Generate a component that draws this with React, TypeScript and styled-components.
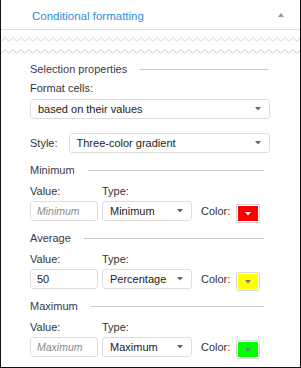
import styled, { createGlobalStyle } from "styled-components";

const GlobalStyle = createGlobalStyle`
  html, body {
    margin: 0;
    padding: 0;
    background: #ffffff;
  }
  body {
    font-family: "Liberation Sans", Arial, sans-serif;
    font-size: 11px;
    color: #333333;
  }
`;

const Panel = styled.div`
  width: 301px;
  height: 368px;
  box-sizing: border-box;
  border-left: 1px solid #111;
  border-right: 1px solid #111;
  border-bottom: 1px solid #111;
  background: #fff;
  display: flex;
  flex-direction: column;
  overflow: hidden;
`;

const Header = styled.div`
  height: 29px;
  flex-shrink: 0;
  border-bottom: 1px solid #dcdcdc;
  display: flex;
  align-items: center;
  justify-content: space-between;
  padding: 0 16px 0 31px;
`;

const HeaderTitle = styled.span`
  color: #2f8ddb;
  font-size: 11.5px;
  padding-top: 2px;
`;

const Zigzags = styled.div`
  display: flex;
  flex-direction: column;
  gap: 7px;
  padding-top: 7px;
`;

const Content = styled.div`
  display: flex;
  flex-direction: column;
  padding: 8px 30px 0 29px;
`;

const SectionHead = styled.div<{ $lineEnd: number; $top: number }>`
  display: flex;
  align-items: center;
  gap: 13px;
  height: 14px;
  margin-top: ${(p) => p.$top}px;
  padding-right: ${(p) => p.$lineEnd}px;
  color: #3a3a4a;
  &::after {
    content: "";
    flex: 1;
    height: 1px;
    background: #c8c8c8;
  }
`;

const Label = styled.div`
  height: 14px;
  line-height: 14px;
  margin-top: 5px;
  color: #333;
`;

const SelectBox = styled.div`
  box-sizing: border-box;
  height: 20px;
  flex: 1;
  min-width: 0;
  border: 1px solid #dedede;
  border-radius: 3px;
  background: #fff;
  display: flex;
  align-items: center;
  justify-content: space-between;
  padding: 0 8px 0 7px;
  color: #222;
`;

const WideSelect = styled(SelectBox)`
  margin-top: 4px;
  flex: none;
`;

const Field = styled(SelectBox)<{ $placeholder?: boolean }>`
  padding: 0 6px;
  color: ${(p) => (p.$placeholder ? "#8a8a8a" : "#222")};
  font-style: ${(p) => (p.$placeholder ? "italic" : "normal")};
  font-size: ${(p) => (p.$placeholder ? "10.5px" : "11px")};
`;

const StyleRow = styled.div`
  display: flex;
  align-items: center;
  gap: 11px;
  margin-top: 14px;
`;

const LabelRow = styled.div`
  display: grid;
  grid-template-columns: 68px 90px;
  column-gap: 4px;
  margin-top: 7px;
  & > ${Label} {
    margin-top: 0;
  }
`;

const InputRow = styled.div`
  display: grid;
  grid-template-columns: 68px 90px auto;
  column-gap: 4px;
  margin-top: 3px;
  height: 20px;
`;

const ColorCell = styled.div`
  display: flex;
  align-items: center;
  gap: 7px;
  padding-left: 5px;
  height: 20px;
`;

const Swatch = styled.div<{ $color: string }>`
  box-sizing: border-box;
  width: 24px;
  height: 19px;
  margin-top: 3px;
  margin-bottom: -2px;
  margin-left: -1px;
  border: 1px solid #d8d8d8;
  border-radius: 2px;
  padding: 1px;
  display: flex;
  & > span {
    flex: 1;
    background: ${(p) => p.$color};
    display: flex;
    align-items: center;
    justify-content: center;
  }
`;

const Caret = ({ up = false, color = "#666" }: { up?: boolean; color?: string }) => (
  <svg width="6" height="4" viewBox="0 0 6 4" style={{ display: "block" }}>
    <polygon points={up ? "0,4 6,4 3,0" : "0,0 6,0 3,3.5"} fill={color} />
  </svg>
);

const Zigzag = () => (
  <svg width="299" height="5" style={{ display: "block" }}>
    <defs>
      <pattern id="zz" width="8" height="5" patternUnits="userSpaceOnUse">
        <polyline points="0,4.5 4,0.5 8,4.5" fill="none" stroke="#c8c8c8" strokeWidth="1" />
      </pattern>
    </defs>
    <rect width="299" height="5" fill="url(#zz)" />
  </svg>
);

type Group = {
  name: string;
  value: string;
  placeholder: boolean;
  type: string;
  color: string;
  arrow: string;
};

const groups: Group[] = [
  { name: "Minimum", value: "Minimum", placeholder: true, type: "Minimum", color: "#ff0000", arrow: "#ffffff" },
  { name: "Average", value: "50", placeholder: false, type: "Percentage", color: "#ffff00", arrow: "#777" },
  { name: "Maximum", value: "Maximum", placeholder: true, type: "Maximum", color: "#00ff00", arrow: "#777" },
];

export default function App() {
  return (
    <>
      <GlobalStyle />
      <Panel>
        <Header>
          <HeaderTitle>Conditional formatting</HeaderTitle>
          <Caret up color="#999" />
        </Header>
        <Zigzags>
          <Zigzag />
          <Zigzag />
        </Zigzags>
        <Content>
          <SectionHead $lineEnd={2} $top={0}>
            Selection properties
          </SectionHead>
          <Label>Format cells:</Label>
          <WideSelect>
            <span>based on their values</span>
            <Caret />
          </WideSelect>
          <StyleRow>
            <span>Style:</span>
            <SelectBox>
              <span>Three-color gradient</span>
              <Caret />
            </SelectBox>
          </StyleRow>
          {groups.map((g) => (
            <div key={g.name}>
              <SectionHead $lineEnd={6} $top={10}>
                {g.name}
              </SectionHead>
              <LabelRow>
                <Label>Value:</Label>
                <Label>Type:</Label>
              </LabelRow>
              <InputRow>
                <Field $placeholder={g.placeholder}>{g.value}</Field>
                <SelectBox>
                  <span>{g.type}</span>
                  <Caret />
                </SelectBox>
                <ColorCell>
                  <span>Color:</span>
                  <Swatch $color={g.color}>
                    <span>
                      <Caret color={g.arrow} />
                    </span>
                  </Swatch>
                </ColorCell>
              </InputRow>
            </div>
          ))}
        </Content>
      </Panel>
    </>
  );
}
